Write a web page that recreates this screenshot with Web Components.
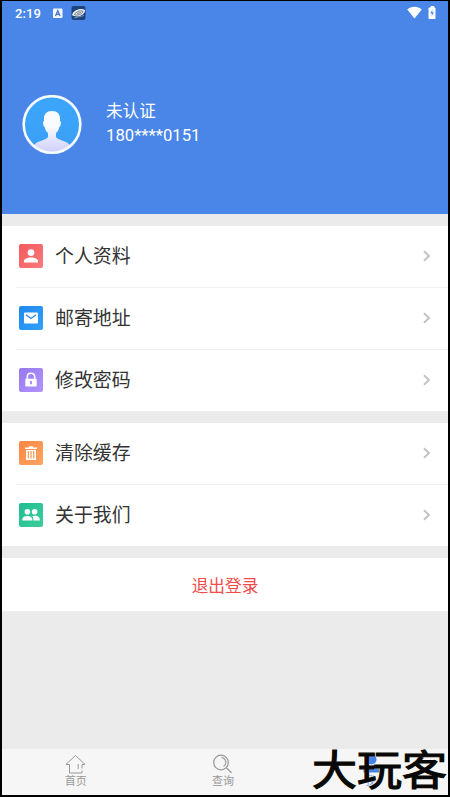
<!DOCTYPE html>
<html lang="zh-CN">
<head>
<meta charset="utf-8">
<title>我</title>
<style>
html,body{margin:0;height:100%;background:#000}
body{font-family:Roboto,"Noto Sans CJK SC",sans-serif;overflow:hidden}
</style>
</head>
<body>
<app-screen>
  <status-bar></status-bar>
  <profile-header name="未认证" phone="180****0151"></profile-header>
  <menu-group>
    <menu-row icon="user">个人资料</menu-row>
    <menu-row icon="mail">邮寄地址</menu-row>
    <menu-row icon="lock">修改密码</menu-row>
  </menu-group>
  <menu-group>
    <menu-row icon="trash">清除缓存</menu-row>
    <menu-row icon="team">关于我们</menu-row>
  </menu-group>
  <logout-button>退出登录</logout-button>
  <tab-bar slot="tabs">
    <tab-item icon="home">首页</tab-item>
    <tab-item icon="search">查询</tab-item>
    <tab-item icon="me" active>我</tab-item>
  </tab-bar>
  <brand-mark slot="mark">大玩客</brand-mark>
</app-screen>
<script>
const define = (name, render) => customElements.define(name, class extends HTMLElement {
  constructor() {
    super();
    this.attachShadow({mode: 'open'}).innerHTML = render(this);
  }
});

define('app-screen', () => `<style>
:host{display:flex;flex-direction:column;box-sizing:border-box;width:450px;height:797px;padding:1px 2px 2px;background:#000;position:relative}
main{flex:1;display:flex;flex-direction:column;background:#ebebeb;min-height:0}
</style><main><slot></slot></main><slot name="tabs"></slot><slot name="mark"></slot>`);

define('status-bar', () => `<style>
:host{display:flex;align-items:center;height:24px;background:#4986e8;color:#fff;padding:0 12px 0 13px}
b{font-size:13px;font-weight:500;width:37px;letter-spacing:.1px}
.gap{flex:1}
svg{display:block}
</style><b>2:19</b>
<svg width="34" height="16" viewBox="0 0 34 16"><rect x="1" y="3.5" width="9.5" height="9.5" rx="1" fill="#f3f7ff"/><path d="M3.5 11 5.8 5.7 8 11M4.4 9.3h2.8" fill="none" stroke="#4c77bd" stroke-width="1.3"/>
<rect x="19.500" y="1" width="14" height="14" rx="2" fill="#1c437c"/><path d="M20 10C21 5 29 2.500 33 5 33.500 10 25 13.500 20 10Z" fill="#e7edf2"/><path d="M22.500 9.500C24 6.500 29 5 31 6.500 30 9.500 25 11 22.500 9.500ZM25 8.500l4-1" stroke="#56616e" fill="none" stroke-width=".8"/><path d="M22 13 32 10.500" stroke="#8fa3bb" stroke-width=".8"/></svg>
<span class="gap"></span>
<svg width="29" height="16" viewBox="0 0 29 16"><path d="M.2 4.500C4.500.8 10.500.8 14.800 4.500L7.500 13.500Z" fill="#fff"/><path d="M22 3h2V1.500h3V3h1v10.500h-6z" fill="#fff" stroke="#fff" stroke-linejoin="round"/><path d="m25.500 4.500-2.200 4H25l-.5 3 2.400-4.200h-1.700z" fill="#4986e8"/></svg>`);

define('profile-header', el => `<style>
:host{display:flex;align-items:flex-start;box-sizing:border-box;height:189px;background:#4986e8;color:#fff;padding:70px 0 0 20px}
svg{display:block;margin-right:24px}
p{margin:0;line-height:26px;font-size:16.700px}
.name{font-size:16.600px;line-height:25px;padding-top:2px;height:24px}
div{padding-top:2px}
</style>
<svg width="60" height="60" viewBox="0 0 60 60"><defs><clipPath id="c"><circle cx="30" cy="29.500" r="27.500"/></clipPath><linearGradient id="p" x2="0" y2="1"><stop offset=".35" stop-color="#f8fbff"/><stop offset="1" stop-color="#c9cbfa"/></linearGradient><linearGradient id="b" x2="0" y2="1"><stop stop-color="#3ba6fc"/><stop offset="1" stop-color="#3b9ff6"/></linearGradient></defs>
<circle cx="30" cy="29.500" r="28.300" fill="url(#b)"/>
<path clip-path="url(#c)" d="M30 16c-6 0-8.500 3.500-8 10-1.500 0-1 5 .7 6 .5 3 1.800 5 3.300 6v4c-2 4-12 3-15 10v8h38v-8c-3-7-13-6-15-10v-4c1.500-1 2.800-3 3.300-6 1.700-1 2.200-6 .7-6 .5-6.500-2-10-8-10Z" fill="url(#p)"/>
<circle cx="30" cy="29.500" r="28.300" fill="none" stroke="#f7fcff" stroke-width="2.600"/></svg>
<div><p class="name">${el.getAttribute('name')}</p><p>${el.getAttribute('phone')}</p></div>`);

define('menu-group', () => `<style>
:host{display:block;background:#fff;margin-top:12px}
:host(:first-of-type){margin-top:11.500px}
::slotted(:not(:first-child)){--line:#f0f0f0}
</style><slot></slot>`);

const badges = {
  user: ['#f45a5c', '#f97a7c', '<circle cx="12" cy="8.700" r="3.400"/><path d="M5 18.500v-1.200c0-5 14-5 14 0v1.200z"/>'],
  mail: ['#2088ee', '#33a0fb', '<rect x="5" y="6.500" width="14" height="11" rx="1"/><path d="m7 8.800 5 3.700 5-3.700" fill="none" stroke="#2490f2" stroke-width="1.300"/>'],
  lock: ['#9878f0', '#b294fc', '<path d="M8.300 11V8.800c0-4.800 7.400-4.800 7.400 0V11" fill="none" stroke="#fff" stroke-width="1.500"/><rect x="6.300" y="10.800" width="11.400" height="7.700" rx="1"/><path d="M12 13v3.200" stroke="#9878f0" stroke-width="1.600"/>'],
  trash: ['#fb8541', '#fda663', '<path d="M6 6.500h4V5.300h4v1.200h4V8H6zM7 9h10v10H7z"/><path d="M9.300 10v7.500M12 10v7.500M14.700 10v7.500" stroke="#fb9650" stroke-width="1.200"/>'],
  team: ['#1fbd91', '#3fcd9c', '<circle cx="8.400" cy="8.700" r="2.800"/><circle cx="15.600" cy="8.700" r="2.800"/><path d="M3.300 17.500v-1c0-4.600 10-4.600 10 0v1zM14.300 17.500v-1.700c0-1-.4-1.900-1.100-2.600 3-1.200 7.600-.3 7.600 3.300v1z"/>']
};
define('menu-row', el => {
  const [from, to, art] = badges[el.getAttribute('icon')];
  return `<style>
:host{display:flex;align-items:center;height:61.700px;padding:0 17px;color:#333;font-size:18.900px;background:linear-gradient(var(--line,#fff),var(--line,#fff)) 14px 0/100% 1px no-repeat}
svg{display:block}
.badge{margin-right:12px}
span{flex:1;line-height:28px;padding-top:2px}
</style><svg class="badge" width="24" height="24" viewBox="0 0 24 24"><defs><linearGradient id="g" x2="1" y2="1"><stop stop-color="${from}"/><stop offset="1" stop-color="${to}"/></linearGradient></defs><rect width="24" height="24" rx="2" fill="url(#g)"/><g fill="#fff">${art}</g></svg>
<span><slot></slot></span>
<svg width="9" height="12" viewBox="0 0 9 12"><path d="m2 1.200 5 4.800-5 4.800" fill="none" stroke="#c2c2c2" stroke-width="1.900"/></svg>`;
});

define('logout-button', () => `<style>
:host{display:flex;align-items:center;justify-content:center;box-sizing:border-box;height:53px;margin-top:12px;padding-top:2px;background:#fff;color:#ef4c4c;font-size:16.700px}
</style><slot></slot>`);

define('tab-bar', () => `<style>
:host{display:flex;height:46px;background:#f6f6f6;padding-right:4px}
::slotted(*){flex:1}
</style><slot></slot>`);

const glyphs = {
  home: '<path d="M4.500 10.500v8.500h12.500v-2.500M17 10.500v4M1 10.300 10.500 1.500l9.500 8.800M1 10.500h3.500M17 10.500h3M13.200 10v5" fill="none" stroke="#999" stroke-width="1"/>',
  search: '<circle cx="9" cy="8.500" r="7.300" fill="none" stroke="#999" stroke-width="1.200"/><path d="M9.500 3.500c5 1 5.500 7 2 9M14.300 13.700l5.200 5" fill="none" stroke="#999" stroke-width="1.200"/>',
  me: '<circle cx="11.500" cy="5.500" r="5" fill="#4484e8"/><path d="M3.500 18.500v-2c0-6.500 16-6.500 16 0v2z" fill="#4484e8"/>'
};
define('tab-item', el => `<style>
:host{display:flex;flex-direction:column;align-items:center;box-sizing:border-box;padding-top:5px;font-size:11px;line-height:14px;color:#999}
:host([active]){color:#6d9bea}
svg{display:block;margin-bottom:1px}
</style><svg width="21" height="20" viewBox="0 0 21 20">${glyphs[el.getAttribute('icon')]}</svg><slot></slot>`);

define('brand-mark', () => `<style>
:host{position:absolute;left:312px;top:743px;font:400 45px/50px "Noto Sans CJK SC",sans-serif;color:#080808;white-space:nowrap;-webkit-text-stroke:1.300px #080808;text-shadow:0 0 1px #fff3d2,0 0 2px #fff3d2;transform:scaleY(.9)}
</style><slot></slot>`);
</script>
</body>
</html>
